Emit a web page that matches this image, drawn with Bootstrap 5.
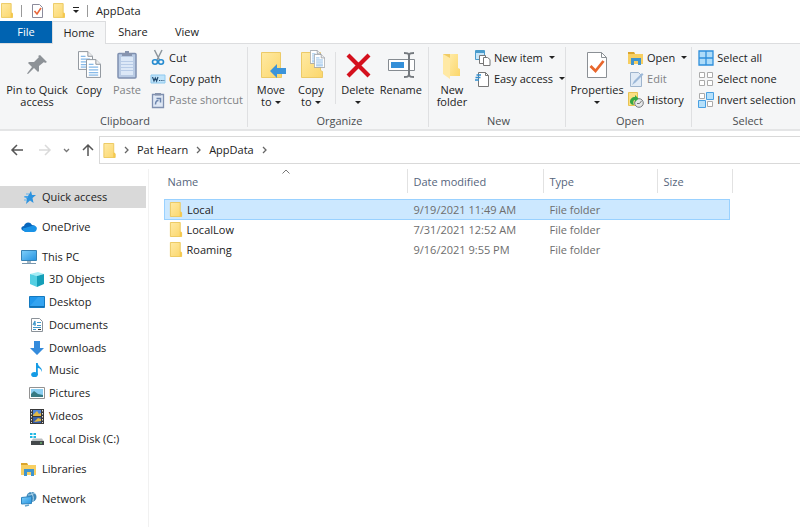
<!DOCTYPE html>
<html lang="en">
<head>
<meta charset="utf-8">
<meta name="viewport" content="width=device-width, initial-scale=1">
<title>AppData</title>
<link rel="stylesheet" href="https://cdn.jsdelivr.net/npm/bootstrap@5.3.0/dist/css/bootstrap.min.css">
<style>
body { font-family: "Open Sans", "Noto Sans", sans-serif; font-size: 11px; line-height: 12px; color: #222; background: #fff; }
svg { display: block; flex: none; overflow: visible; }
button { border: 0; background: none; padding: 0; color: inherit; }
a { color: inherit; text-decoration: none; }
.titlebar { height: 21px; padding-left: 1px; gap: 8px; }
.titlebar h1 { font-size: 11px; line-height: 16px; margin: 0; font-weight: 400; }
.titlebar .check { padding: 0 2px; }
.tick { width: 1px; height: 12px; background: #999; }
.tabs { height: 22px; }
.tabs .tab { height: 22px; width: 54px; text-align: center; }
.tabs .tab-file { width: 52px; background: #0063b1; color: #fff; }
.tabs .tab-open { height: 23px; background: #f5f6f7; border: 1px solid #dcdddf; border-bottom: 0; margin-bottom: -1px; position: relative; z-index: 1; }
.ribbon { min-height: 88px; background: #f5f6f7; border-top: 1px solid #dcdddf; border-bottom: 2px solid #e4e5e6; }
.group { border-right: 1px solid #dfe0e2; margin: 3px 0 2px; padding-left: 3px; }
.group:last-child { border-right: 0; }
.group-name { color: #4a4d50; }
.big { width: 40px; line-height: 12px; padding-top: 4px; white-space: nowrap; }
.big svg { margin: 0 auto 5px; }
.big.w-copy { width: 36px; }
.big.w-pin { width: 68px; }
.big.w-props { width: 56px; }
.big.w-rename { width: 46px; }
.smalls { padding-left: 3px; }
.small-cmd { height: 21px; gap: 3px; white-space: nowrap; }
.dim { color: #808285; }
.inner-line { width: 1px; height: 52px; background: #dfe0e2; margin: 5px 2px 0 4px; }
.arrow { display: inline-block; border: 3px solid transparent; border-top-color: #222; border-bottom: 0; vertical-align: 2px; margin-left: 3px; }
.below { display: block; width: 6px; margin: 5px auto 0; }
.navrow { height: 38px; padding: 5px 0; }
.nav-buttons { width: 99px; padding-left: 11px; }
.crumbs { border: 1px solid #d9d9d9; border-right: 0; padding-left: 3px; gap: 8px; }
.side { width: 149px; border-right: 1px solid #f1f1f1; padding-top: 17px; }
.side ul { list-style: none; margin: 0; padding: 0; }
.places { display: grid; gap: 8px; }
.place { height: 22px; padding-left: 21px; gap: 5px; margin-right: 2px; }
.place.current { background: #d9d9d9; }
.inside { display: grid; grid-template-rows: repeat(8, 1fr); height: 182px; }
.inside .place { height: auto; padding-left: 29px; gap: 4px; }
.files { table-layout: fixed; width: 568px; margin: 0 0 0 15px; color: #6d6d6d; }
.files th { font-weight: 400; padding: 0 0 6px; color: #56657c; position: relative; }
.files th div { height: 24px; line-height: 25px; border-right: 1px solid #e2e2e2; padding-left: 6px; }
.files th:first-child div { padding-left: 3px; }
.files td { height: 20px; padding: 0 0 0 6px; }
.files td:first-child { padding-left: 4px; color: #222; }
.files td:last-child { padding: 0; }
.files .chosen td:not(:last-child) { background: #cce8ff; border: solid #99d1ff; border-width: 1px 0; }
.files .chosen td:first-child { border-left-width: 1px; }
.files .chosen td:nth-child(4) { border-right-width: 1px; }
.sorted { position: absolute; left: 117px; top: 0; }
</style>
<script src="https://cdn.jsdelivr.net/npm/bootstrap@5.3.0/dist/js/bootstrap.bundle.min.js"></script>
</head>
<body class="d-flex flex-column min-vh-100">
<svg width="0" height="0" class="position-absolute" aria-hidden="true">
  <defs>
    <linearGradient id="gold" x2="1" y2="1"><stop stop-color="#ffeaa4"/><stop offset="1" stop-color="#fbd66b"/></linearGradient>
    <linearGradient id="screen" x2="1" y2="1"><stop stop-color="#7fd0fb"/><stop offset="1" stop-color="#2492e0"/></linearGradient>
    <symbol id="folder" viewBox="0 0 13 16"><path d="M.5.5h10.500v10l1.500 1v4H.5z" fill="url(#gold)" stroke="#ecc85c"/><path d="M10.500 10.500h2v5h-2z" fill="#f5c84c"/></symbol>
    <symbol id="page" viewBox="0 0 16 20"><path d="M.5.5h10l5 5v14H.5z" fill="#fff" stroke="#8a9097"/><path d="M10.500.5v5h5" fill="#eee" stroke="#8a9097"/><path d="M3 5.500h5M3 8.500h10M3 11.500h10M3 14.500h10M3 17h10" stroke="#5ba0e0"/></symbol>
    <symbol id="library" viewBox="0 0 16 14"><path d="M0 1h6l1 2h8v10H0z" fill="#f7cf62"/><path d="M0 1h6l1 2H0z" fill="#dba52c"/><path d="M3 14V7h10v7h-3v-4H6v4z" fill="#3e94cf"/></symbol>
    <symbol id="chev" viewBox="0 0 5 8"><path d="M1 1l3 3-3 3" fill="none" stroke="#666" stroke-width="1.300"/></symbol>
  </defs>
</svg>

<header class="titlebar d-flex align-items-center">
  <svg width="12" height="15" aria-hidden="true"><use href="#folder"/></svg>
  <span class="tick"></span>
  <button class="check" aria-label="Properties"><svg width="11" height="14" viewBox="0 0 11 14"><path d="M.5.5h7l3 3v10H.5z" fill="#fff" stroke="#8b8b9b"/><path d="M2.500 7l2.500 3 4-6" fill="none" stroke="#e8673a" stroke-width="1.600"/></svg></button>
  <button aria-label="New folder"><svg width="12" height="15"><use href="#folder"/></svg></button>
  <button aria-label="Customize toolbar"><svg width="6" height="7" viewBox="0 0 6 7"><path d="M0 .5h6" stroke="#222"/><path d="M0 3h6L3 6z" fill="#222"/></svg></button>
  <span class="tick"></span>
  <h1>AppData</h1>
</header>

<nav class="tabs d-flex" aria-label="Ribbon tabs">
  <button class="tab tab-file">File</button>
  <button class="tab tab-open">Home</button>
  <button class="tab">Share</button>
  <button class="tab">View</button>
</nav>

<section class="ribbon d-flex">
  <div class="group d-flex flex-column">
    <div class="d-flex flex-grow-1 pe-1">
      <button class="big w-pin align-self-start"><svg width="28" height="28" viewBox="0 0 28 28"><path d="M17 4l7 7-2 1-1-1-5 4v5l-1 1-4-4-6 6-1-.5 5-6.500-4-4 1-1h5l5-5-1-1z" fill="#8d9297"/></svg>Pin to Quick<br>access</button>
      <button class="big w-copy align-self-start"><svg width="28" height="28" viewBox="0 0 28 28"><use href="#page" x="3" y="0" width="15" height="19"/><use href="#page" x="11" y="8" width="15" height="19"/></svg>Copy</button>
      <button class="big dim align-self-start"><svg width="28" height="28" viewBox="0 0 28 28"><rect x="5" y="2.500" width="18" height="24.500" rx="1" fill="#b9cbe4" stroke="#7f90b0" stroke-width="1.500"/><path d="M8 6h12v18H8z" fill="#dce8f7"/><path d="M8 10.500h12M8 13.500h12M8 16.500h12M8 19.500h12" stroke="#b7cbe7"/><path d="M9 2h3V0h4v2h3v3H9z" fill="#8794ae"/></svg>Paste</button>
      <div class="smalls">
        <button class="small-cmd d-flex align-items-center"><svg width="16" height="16" viewBox="0 0 16 16"><path d="M4.500 0l5 10M12 0L7 10" stroke="#8d969d" stroke-width="1.500"/><ellipse cx="5" cy="12" rx="2.500" ry="2.200" fill="none" stroke="#258bd0" stroke-width="1.600"/><ellipse cx="11" cy="12" rx="2.500" ry="2.200" fill="none" stroke="#258bd0" stroke-width="1.600"/></svg>Cut</button>
        <button class="small-cmd d-flex align-items-center"><svg width="16" height="16" viewBox="0 0 16 16"><path d="M1 4h14v8H1z" fill="#bfe3fa" stroke="#8dc9ef"/><path d="M2.500 6l1.500 4 1.300-3 1.300 3L8 6M9 9.500h1.300m1 0h1.200m1 0h.8" fill="none" stroke="#234b70" stroke-width="1.200"/></svg>Copy path</button>
        <button class="small-cmd dim d-flex align-items-center"><svg width="16" height="16" viewBox="0 0 16 16"><path d="M2.500 2.500h11v13h-11z" fill="#dfe8f5" stroke="#7f90b0" stroke-width="1.300"/><path d="M5 1h6v2.500H5z" fill="#8794ae"/><path d="M5.500 12.500c0-3 1-4 3-4M6.500 6.500h4v4" fill="none" stroke="#6c85ad" stroke-width="1.500"/></svg>Paste shortcut</button>
      </div>
    </div>
    <div class="group-name text-center">Clipboard</div>
  </div>

  <div class="group d-flex flex-column">
    <div class="d-flex flex-grow-1 pe-1">
      <button class="big align-self-start"><svg width="28" height="28" viewBox="0 0 28 28"><path d="M4.500 1.500h19v18l1 1v6h-20z" fill="url(#gold)" stroke="#ecca68"/><path d="M13 20l7-7v4h9v6h-9v4z" fill="#3c94da"/></svg>Move<br>to<i class="arrow"></i></button>
      <button class="big align-self-start"><svg width="28" height="28" viewBox="0 0 28 28"><path d="M4.500 1.500h19v18l2 1v6h-21z" fill="url(#gold)" stroke="#ecca68"/><use href="#page" x="13" y="-1" width="11" height="14"/><use href="#page" x="17" y="3" width="11" height="14"/></svg>Copy<br>to<i class="arrow"></i></button>
      <span class="inner-line"></span>
      <button class="big align-self-start"><svg width="28" height="28" viewBox="0 0 28 28"><path d="M4 4l21 21M25 4L4 25" stroke="#d4101d" stroke-width="4.200"/></svg>Delete<i class="arrow below"></i></button>
      <button class="big w-rename align-self-start"><svg width="28" height="28" viewBox="0 0 28 28"><path d="M1.500 8.500h26v11h-26z" fill="#fff" stroke="#858b91"/><path d="M4 11h13v6H4z" fill="#348fd8"/><path d="M17 2c3 0 5 0 5 3 0-3 2-3 5-3M22 4v21M17 26c3 0 5 0 5-3 0 3 2 3 5 3" fill="none" stroke="#74797e" stroke-width="2"/></svg>Rename</button>
    </div>
    <div class="group-name text-center">Organize</div>
  </div>

  <div class="group d-flex flex-column">
    <div class="d-flex flex-grow-1">
      <button class="big align-self-start"><svg width="28" height="28" viewBox="0 0 28 28"><path d="M5 3h15v21l-8-1-7-1z" fill="#f0cb65"/><path d="M5 3l7 4v21l-7-5z" fill="#ffe9a5"/><path d="M12 3h8v14l2 1v7H12z" fill="url(#gold)"/></svg>New<br>folder</button>
      <div class="smalls">
        <button class="small-cmd d-flex align-items-center"><svg width="16" height="16" viewBox="0 0 16 16"><path d="M.5.5h9v9h-9z" fill="#c8e5f8" stroke="#4a9ccc"/><path d="M0 1h10v2H0z" fill="#4a9ccc"/><path d="M4.500 5.500h6v8h-6z" fill="#fff" stroke="#777"/><path d="M8.500 7.500h4l2.500 2v6H8.500z" fill="#fff" stroke="#777"/></svg>New item<i class="arrow"></i></button>
        <button class="small-cmd d-flex align-items-center"><svg width="16" height="16" viewBox="0 0 16 16"><path d="M3.500 1.500h7l3 3v11h-10z" fill="#fff" stroke="#777"/><path d="M10.500 1.500v3h3" fill="none" stroke="#777"/><path d="M1.500 4H6M.5 6.500h5M0 9h4" stroke="#318ed0" stroke-width="1.500"/></svg>Easy access<i class="arrow"></i></button>
      </div>
    </div>
    <div class="group-name text-center">New</div>
  </div>

  <div class="group d-flex flex-column">
    <div class="d-flex flex-grow-1 pe-1">
      <button class="big w-props align-self-start"><svg width="28" height="28" viewBox="0 0 28 28"><path d="M4.500 1.500h14l5 5v20h-19z" fill="#fff" stroke="#8b9095"/><path d="M18.500 1.500v5h5" fill="none" stroke="#8b9095"/><path d="M7.500 15l5 5 8-10" fill="none" stroke="#e8662c" stroke-width="2.800"/></svg>Properties<i class="arrow below"></i></button>
      <div class="smalls">
        <button class="small-cmd d-flex align-items-center"><svg width="16" height="14"><use href="#library"/></svg>Open<i class="arrow"></i></button>
        <button class="small-cmd dim d-flex align-items-center"><svg width="16" height="16" viewBox="0 0 16 16"><path d="M2.500 1.500h8l3 3v11h-11z" fill="#e1ebf6" stroke="#9eb4cd"/><path d="M4 14l2-4 8-8 1.500 1.500-8 8z" fill="#9cb8d8"/></svg>Edit</button>
        <button class="small-cmd d-flex align-items-center"><svg width="16" height="16" viewBox="0 0 16 16"><path d="M.5.5h9v13h-9z" fill="#fbdf83" stroke="#e7c253"/><circle cx="11" cy="11" r="4.300" fill="#e6e8e9" stroke="#777b80"/><path d="M9 11.500h2.500L13.500 9" fill="none" stroke="#777"/><path d="M2 10c0-3 2-5 5-5V3l3.500 3.500L7 10V8c-2 0-2 3-1 5-2 0-4-1-4-3z" fill="#35a845"/></svg>History</button>
      </div>
    </div>
    <div class="group-name text-center">Open</div>
  </div>

  <div class="group d-flex flex-column flex-grow-1">
    <div class="d-flex flex-grow-1">
      <div class="smalls">
        <button class="small-cmd d-flex align-items-center"><svg width="16" height="16" viewBox="0 0 16 16"><path d="M1 1h14v14H1zM8 1v14M1 8h14" fill="#aedcf9" stroke="#2e8fdb" stroke-width="1.300"/></svg>Select all</button>
        <button class="small-cmd d-flex align-items-center"><svg width="16" height="16" viewBox="0 0 16 16"><path d="M1.500 1.500h5v5h-5zM9.500 1.500h5v5h-5zM1.500 9.500h5v5h-5zM9.500 9.500h5v5h-5z" fill="#fff" stroke="#aaa"/></svg>Select none</button>
        <button class="small-cmd d-flex align-items-center"><svg width="16" height="16" viewBox="0 0 16 16"><path d="M1.500 1.500h5v5h-5zM9.500 9.500h5v5h-5z" fill="#fff" stroke="#aaa"/><path d="M8.500.5h7v7h-7zM.5 8.500h7v7h-7z" fill="#b6e0fa" stroke="#49a0e2"/></svg>Invert selection</button>
      </div>
    </div>
    <div class="group-name text-center">Select</div>
  </div>
</section>

<div class="navrow d-flex">
  <div class="nav-buttons d-flex align-items-center">
    <button aria-label="Back"><svg width="12" height="12" viewBox="0 0 12 12"><path d="M12 6H1M6 1L1 6l5 5" fill="none" stroke="#555" stroke-width="1.500"/></svg></button>
    <button class="ms-3" aria-label="Forward"><svg width="12" height="12" viewBox="0 0 12 12"><path d="M0 6h11M6 1l5 5-5 5" fill="none" stroke="#dadada" stroke-width="1.500"/></svg></button>
    <button class="ms-2" aria-label="Recent"><svg class="ms-1" width="7" height="5" viewBox="0 0 7 5"><path d="M1 1l2.500 2.500L6 1" fill="none" stroke="#777" stroke-width="1.300"/></svg></button>
    <button class="ms-2" aria-label="Up"><svg class="ms-1" width="12" height="12" viewBox="0 0 12 12"><path d="M6 12V1M1 6l5-5 5 5" fill="none" stroke="#555" stroke-width="1.500"/></svg></button>
  </div>
  <div class="crumbs d-flex align-items-center flex-grow-1">
    <svg width="13" height="15" aria-hidden="true"><use href="#folder"/></svg>
    <svg width="5" height="8" aria-hidden="true"><use href="#chev"/></svg>
    <a href="#">Pat Hearn</a>
    <svg width="5" height="8" aria-hidden="true"><use href="#chev"/></svg>
    <a href="#">AppData</a>
    <svg width="5" height="8" aria-hidden="true"><use href="#chev"/></svg>
  </div>
</div>

<main class="d-flex flex-grow-1">
  <nav class="side flex-shrink-0" aria-label="Places">
    <ul class="places">
      <li><a href="#" class="place current d-flex align-items-center"><svg width="16" height="16" viewBox="0 0 16 16"><path d="M10 2l1 4h4l-3.500 3 1 5L9 11.500 5 15l1-5-3-3h4z" fill="#2d93df"/><path d="M3 8h4M3 11h3M5 5h3" stroke="#62b4ee"/></svg>Quick access</a></li>
      <li><a href="#" class="place d-flex align-items-center"><svg width="16" height="16" viewBox="0 0 16 16"><path d="M3 12c-4-1-3-5 0-5 1-4 6-5 8-1 4 0 4 3 4 6z" fill="#0867bd"/><path d="M3 12c-2-1-2-3 1-3l3-1 4-1c3-1 6 1 4.500 4-1 2-2 2-4 2H4.500c-1 0-1 0-1.500-1z" fill="#1992e6"/></svg>OneDrive</a></li>
      <li>
        <a href="#" class="place d-flex align-items-center"><svg width="16" height="16" viewBox="0 0 16 16"><path d="M.5 1.500h15v10H.5z" fill="url(#screen)" stroke="#3782b4"/><path d="M6 12h4v2H6z" fill="#a5b7c4"/><path d="M1 14.500h14" stroke="#7896ad"/></svg>This PC</a>
        <ul class="inside">
          <li class="d-grid"><a href="#" class="place d-flex align-items-center"><svg width="16" height="16" viewBox="0 0 16 16"><path d="M1 3l8-2 6 2-7 2z" fill="#a5edf5"/><path d="M1 3l7 2v11l-7-3z" fill="#53cfe2"/><path d="M8 5l7-2v10l-7 3z" fill="#159fb8"/></svg>3D Objects</a></li>
          <li class="d-grid"><a href="#" class="place d-flex align-items-center"><svg width="16" height="16" viewBox="0 0 16 16"><path d="M.5 2.500h15v11H.5z" fill="#2097ec" stroke="#1479bf"/><path d="M1 12l8-9h6v9z" fill="#34a4f1"/><path d="M1 12.500h14" stroke="#1371b5"/></svg>Desktop</a></li>
          <li class="d-grid"><a href="#" class="place d-flex align-items-center"><svg width="16" height="16" viewBox="0 0 16 16"><path d="M2.500 1.500h8l3 3v10h-11z" fill="#fff" stroke="#8b9299"/><path d="M4 8l2-4v5M4 7h3M8 5.500h4M8 8.500h4M4 10.500h8M4 12.500h3" fill="none" stroke="#3f98ca" stroke-width="1.200"/><path d="M9 12.500h3" stroke="#333"/></svg>Documents</a></li>
          <li class="d-grid"><a href="#" class="place d-flex align-items-center"><svg width="16" height="16" viewBox="0 0 16 16"><path d="M5 1h6v7h4l-7 7-7-7h4z" fill="#348bdc"/></svg>Downloads</a></li>
          <li class="d-grid"><a href="#" class="place d-flex align-items-center"><svg width="16" height="16" viewBox="0 0 16 16"><ellipse cx="5.500" cy="12.500" rx="3.300" ry="2.600" fill="#159be5"/><path d="M7 1h1.800c0 4 5 4 4 9-1-3-2-4-4-4v7H7z" fill="#159be5"/></svg>Music</a></li>
          <li class="d-grid"><a href="#" class="place d-flex align-items-center"><svg width="16" height="16" viewBox="0 0 16 16"><path d="M.5 2.500h15v11H.5z" fill="#fff" stroke="#929292"/><path d="M2 4h12v8H2z" fill="#8bcff2"/><path d="M2 9l3-3 4 3 5 1v2H2z" fill="#377a83"/></svg>Pictures</a></li>
          <li class="d-grid"><a href="#" class="place d-flex align-items-center"><svg width="16" height="16" viewBox="0 0 16 16"><path d="M1 1h14v15H1z" fill="#393939"/><path d="M4 2h8v6H4z" fill="#4f84d8"/><path d="M4 9h8v6H4z" fill="#375da6"/><path d="M4 7l4-4 2 3 2-1v3H4zM5 14l4-4 3 1v2z" fill="#e1b846"/><path d="M2.500 2v13M13.500 2v13" stroke="#ddd" stroke-dasharray="1.500 1.500"/></svg>Videos</a></li>
          <li class="d-grid"><a href="#" class="place d-flex align-items-center"><svg width="16" height="16" viewBox="0 0 16 16"><path d="M1 2h2.500v2H1zM4.500 2H7v2H4.500zM1 5h2.500v2H1zM4.500 5H7v2H4.500z" fill="#20b8e4"/><path d="M4 7.500h9l2 3H2z" fill="#babdc0"/><path d="M2 10h13v4H2z" fill="#44484b"/><path d="M11 12h2" stroke="#79e27c"/></svg>Local Disk (C:)</a></li>
        </ul>
      </li>
      <li><a href="#" class="place d-flex align-items-center"><svg width="16" height="14"><use href="#library"/></svg>Libraries</a></li>
      <li><a href="#" class="place d-flex align-items-center"><svg width="16" height="16" viewBox="0 0 16 16"><circle cx="10.500" cy="6" r="5" fill="#4089b9"/><path d="M7 4c3 0 5-1 7-2M10 1c2 3 3 6 2 9" fill="none" stroke="#add6ed"/><path d="M.5 6.500l10-1v7l-10 .5z" fill="url(#screen)" stroke="#2d83bd"/><path d="M4 15l4-1" stroke="#65a4cb" stroke-width="1.500"/></svg>Network</a></li>
    </ul>
  </nav>
  <div class="flex-grow-1">
    <table class="files">
      <colgroup><col width="243"><col width="136"><col width="114"><col width="72"><col width="3"></colgroup>
      <thead><tr>
        <th scope="col" aria-sort="ascending"><div>Name</div><svg class="sorted" width="8" height="5" viewBox="0 0 8 5"><path d="M.5 4.500L4 1l3.500 3.500" fill="none" stroke="#777"/></svg></th>
        <th scope="col"><div>Date modified</div></th><th scope="col"><div>Type</div></th><th scope="col" colspan="2"><div>Size</div></th>
      </tr></thead>
      <tbody>
        <tr class="chosen"><td><span class="d-flex align-items-center gap-1"><svg width="14" height="15"><use href="#folder"/></svg>Local</span></td><td>9/19/2021 11:49 AM</td><td>File folder</td><td></td><td></td></tr>
        <tr><td><span class="d-flex align-items-center gap-1"><svg width="14" height="15"><use href="#folder"/></svg>LocalLow</span></td><td>7/31/2021 12:52 AM</td><td>File folder</td><td></td><td></td></tr>
        <tr><td><span class="d-flex align-items-center gap-1"><svg width="14" height="15"><use href="#folder"/></svg>Roaming</span></td><td>9/16/2021 9:55 PM</td><td>File folder</td><td></td><td></td></tr>
      </tbody>
    </table>
  </div>
</main>
</body>
</html>
